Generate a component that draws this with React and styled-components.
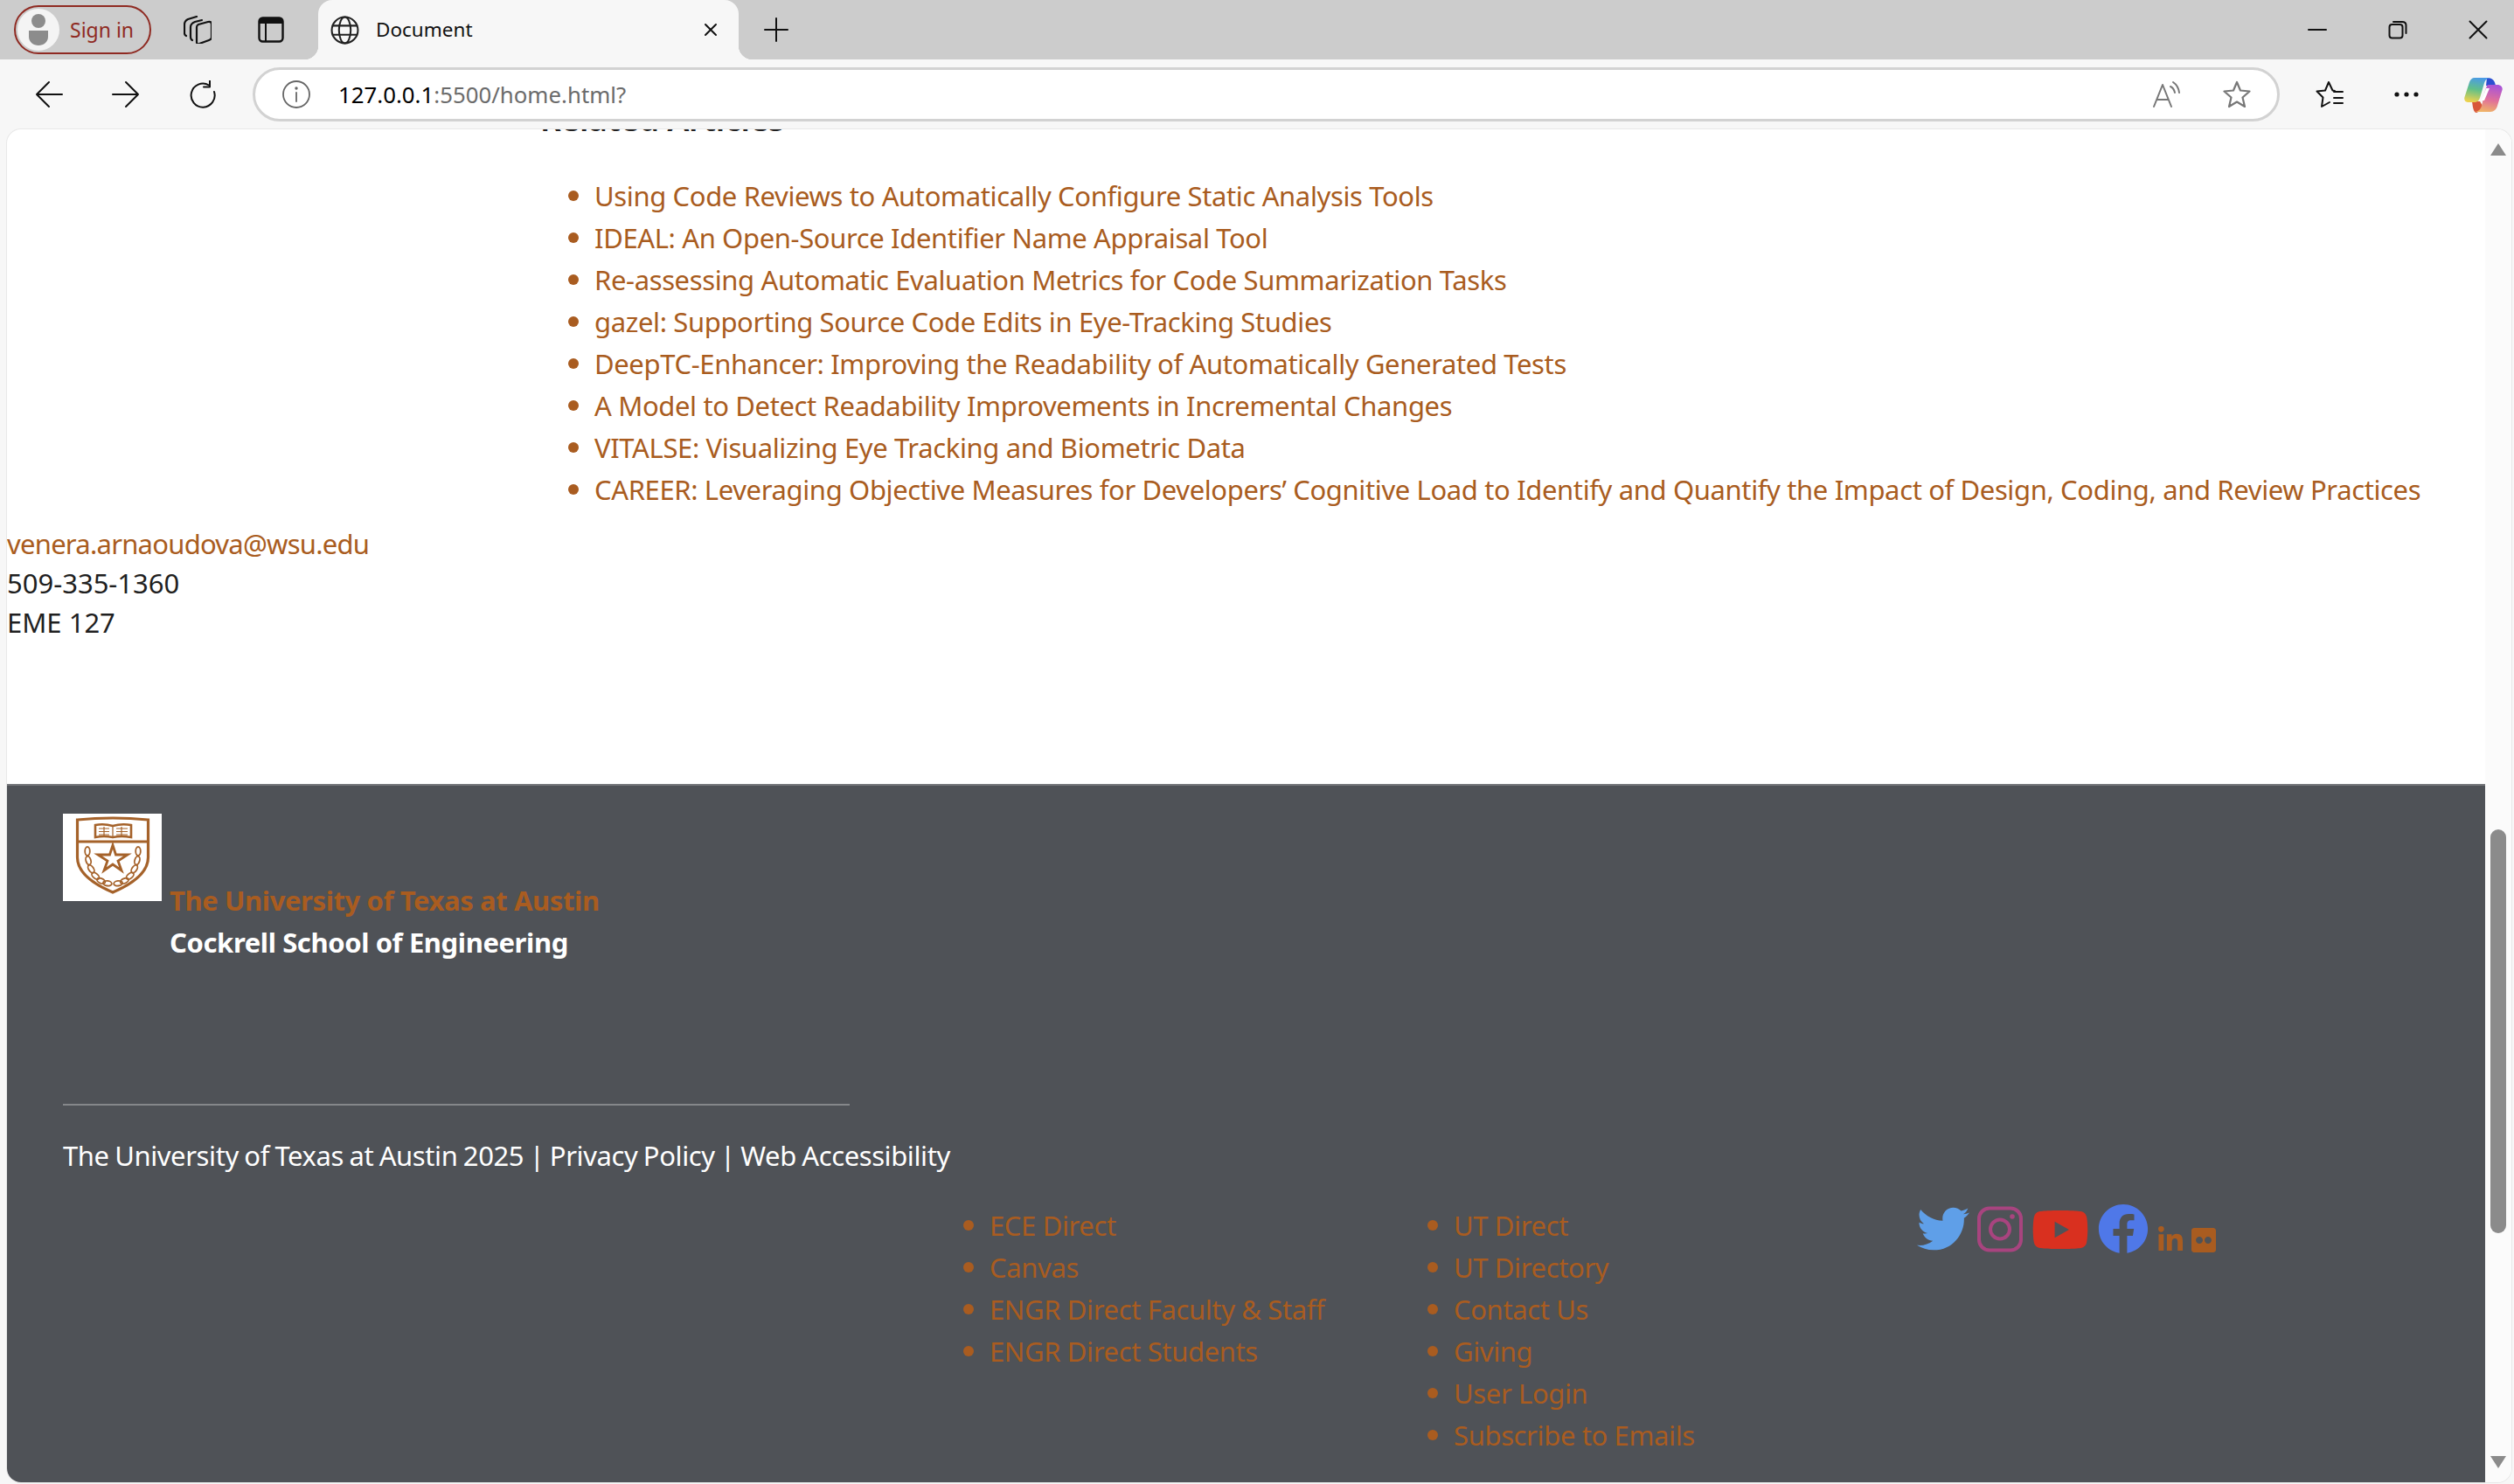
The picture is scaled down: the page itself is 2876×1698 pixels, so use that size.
import React from 'react';
import styled, { createGlobalStyle } from 'styled-components';
import { FaTwitter, FaYoutube, FaFacebook, FaLinkedinIn, FaFlickr } from 'react-icons/fa';

const articles = [
  'Using Code Reviews to Automatically Configure Static Analysis Tools',
  'IDEAL: An Open-Source Identifier Name Appraisal Tool',
  'Re-assessing Automatic Evaluation Metrics for Code Summarization Tasks',
  'gazel: Supporting Source Code Edits in Eye-Tracking Studies',
  'DeepTC-Enhancer: Improving the Readability of Automatically Generated Tests',
  'A Model to Detect Readability Improvements in Incremental Changes',
  'VITALSE: Visualizing Eye Tracking and Biometric Data',
  'CAREER: Leveraging Objective Measures for Developers’ Cognitive Load to Identify and Quantify the Impact of Design, Coding, and Review Practices',
];

const directLinks = ['ECE Direct', 'Canvas', 'ENGR Direct Faculty & Staff', 'ENGR Direct Students'];
const utLinks = ['UT Direct', 'UT Directory', 'Contact Us', 'Giving', 'User Login', 'Subscribe to Emails'];

const orange = '#a95c20';
const fontStack = '"Noto Sans", "Open Sans", sans-serif';

const GlobalStyle = createGlobalStyle`
  html, body {
    margin: 0;
    padding: 0;
    overflow: hidden;
    background: #f7f7f7;
    font-family: ${fontStack};
  }
`;

const Window = styled.div`
  width: 2876px;
  height: 1698px;
  display: flex;
  flex-direction: column;
  background: #f7f7f7;
  overflow: hidden;
`;

const TabStrip = styled.div`
  height: 68px;
  flex: none;
  display: flex;
  align-items: center;
  background: #cccccc;
`;

const SignIn = styled.div`
  width: 157px;
  height: 56px;
  margin-left: 16px;
  box-sizing: border-box;
  border: 2px solid #8f2a22;
  border-radius: 28px;
  display: flex;
  align-items: center;
  gap: 12px;
  padding-left: 2px;
  color: #8f2a22;
  font-size: 23px;
`;

const Avatar = styled.div`
  width: 48px;
  height: 48px;
  border-radius: 50%;
  background: #f4f4f4;
  display: flex;
  align-items: center;
  justify-content: center;
`;

const Slot = styled.div`
  width: 48px;
  height: 48px;
  flex: none;
  display: flex;
  align-items: center;
  justify-content: center;
  margin-left: ${(p) => p.$left || 0}px;
`;

const Tab = styled.div`
  position: relative;
  width: 481px;
  height: 68px;
  margin-left: 30px;
  box-sizing: border-box;
  padding: 0 24px 0 14px;
  display: flex;
  align-items: center;
  background: #f7f7f7;
  border-radius: 16px 16px 0 0;

  &::before,
  &::after {
    content: '';
    position: absolute;
    bottom: 0;
    width: 16px;
    height: 16px;
  }
  &::before {
    left: -16px;
    background: radial-gradient(circle at 0 0, transparent 16px, #f7f7f7 16.5px);
  }
  &::after {
    right: -16px;
    background: radial-gradient(circle at 100% 0, transparent 16px, #f7f7f7 16.5px);
  }
`;

const TabTitle = styled.span`
  flex: 1;
  margin-left: 19px;
  font-size: 22.5px;
  line-height: 30px;
  color: #111;
`;

const WindowControls = styled.div`
  margin-left: auto;
  margin-right: -5px;
  display: flex;
  align-items: center;
`;

const ControlSlot = styled.div`
  width: 92px;
  height: 68px;
  display: flex;
  align-items: center;
  justify-content: center;
`;

const Toolbar = styled.div`
  height: 80px;
  flex: none;
  display: flex;
  align-items: center;
  padding-left: 32px;
  gap: 40px;
  background: #f7f7f7;
`;

const AddressBar = styled.div`
  width: 2319px;
  height: 62px;
  margin-left: -7px;
  box-sizing: border-box;
  border: 3px solid #d2d2d2;
  border-radius: 31px;
  background: #fff;
  display: flex;
  align-items: center;
  padding: 0 30px 0 31px;
  flex: none;
  margin-right: -7px;
`;

const Url = styled.div`
  flex: 1;
  margin-left: 32px;
  font-size: 25.8px;
  color: #6b6b6b;

  b {
    font-weight: 400;
    color: #000;
  }
`;

const AddressIcons = styled.div`
  display: flex;
  align-items: center;
  gap: 48px;
`;

const Panel = styled.div`
  width: 2865px;
  height: 1548px;
  margin-left: 8px;
  flex: none;
  display: flex;
  background: #fff;
  border-radius: 16px;
  overflow: hidden;
  box-shadow: 0 0 0 1px #e8e8e8;
`;

const Page = styled.div`
  flex: 1;
  min-width: 0;
  display: flex;
  flex-direction: column;
`;

const Article = styled.div`
  height: 749px;
  flex: none;
  box-sizing: border-box;
  overflow: hidden;
  color: #1f1f1f;
  font-size: 31px;
`;

const Heading = styled.h3`
  margin: -36px 0 0 610px;
  height: 48px;
  line-height: 48px;
  font-size: 37px;
  font-weight: 600;
  letter-spacing: -0.2px;
  color: #212121;
`;

const ArticleList = styled.ul`
  margin: 40px 0 0 0;
  padding: 0 0 0 672px;
  list-style: none;
`;

const LinkItem = styled.li`
  position: relative;
  height: 48px;
  line-height: 48px;
  white-space: nowrap;
  letter-spacing: -0.37px;
  color: ${orange};

  &::before {
    content: '';
    position: absolute;
    left: -30px;
    top: 18px;
    width: 12px;
    height: 12px;
    border-radius: 50%;
    background: ${orange};
  }
`;

const Contact = styled.div`
  margin-top: 16px;
  line-height: 45px;

  a {
    color: ${orange};
    letter-spacing: -0.75px;
    text-decoration: none;
  }
`;

const Footer = styled.footer`
  flex: 1;
  background: #4f5257;
  border-top: 2px solid #75777b;
  padding: 32px 0 0 64px;
  box-sizing: border-box;
  color: #fff;
  font-size: 31px;
`;

const Brand = styled.div`
  display: flex;
  gap: 9px;
`;

const Logo = styled.div`
  width: 113px;
  height: 100px;
  background: #fff;
  flex: none;
`;

const BrandText = styled.div`
  padding-top: 75px;
  line-height: 48px;
  font-weight: 700;
  font-size: 31px;
  letter-spacing: -0.4px;
`;

const BrandName = styled.div`
  color: ${orange};
`;

const Rule = styled.hr`
  width: 900px;
  margin: 161px 0 0;
  border: 0;
  border-top: 2px solid #85878a;
`;

const Legal = styled.div`
  margin-top: 33px;
  line-height: 48px;
  letter-spacing: -0.4px;
  word-spacing: -1.2px;
`;

const LinkGrid = styled.div`
  display: grid;
  grid-template-columns: 531px 530px auto;
  margin: 32px 0 0 1060px;
`;

const FooterList = styled.ul`
  margin: 0;
  padding: 0;
  list-style: none;
`;

const Socials = styled.div`
  display: flex;
  align-items: flex-end;
  height: 59px;
  margin-top: -3px;
`;

const SocialIcon = styled.div`
  display: flex;
  color: ${(p) => p.$color};
  margin-left: ${(p) => p.$left || 0}px;
  margin-bottom: ${(p) => p.$bottom || 0}px;
`;

const Scrollbar = styled.div`
  width: 30px;
  flex: none;
  box-sizing: border-box;
  padding: 16px 6px 16px;
  display: flex;
  flex-direction: column;
  background: #fbfbfb;
`;

const Thumb = styled.div`
  height: 462px;
  margin-top: 771px;
  border-radius: 9px;
  background: #8b8b8b;
`;

const Arrow = styled.div`
  width: 0;
  height: 0;
  border-left: 9px solid transparent;
  border-right: 9px solid transparent;
  ${(p) => (p.$down
    ? 'border-top: 14px solid #8b8b8b; margin-top: auto;'
    : 'border-bottom: 14px solid #8b8b8b;')}
`;

const Line = ({ size = 32, color = '#111', width = 2, children, box = 32 }) => (
  <svg width={size} height={size} viewBox={`0 0 ${box} ${box}`} fill="none" stroke={color} strokeWidth={width} strokeLinecap="round" strokeLinejoin="round">
    {children}
  </svg>
);

const Crest = () => {
  const c = '#a5622a';
  const leaves = [0, 1, 2, 3, 4, 5];
  return (
    <svg width="113" height="100" viewBox="0 0 113 100" fill="none" stroke={c}>
      <path d="M16.5 7 Q57 3 97.5 7 V50 C97.5 68 78 81 57 90 C36 81 16.5 68 16.5 50 Z" strokeWidth="3.2" />
      <path d="M16.5 32 H97.5" strokeWidth="3.2" />
      <path d="M37 13 Q47 11 57 14 Q67 11 78 13 V27 Q67 25 57 27 Q47 25 37 27 Z" strokeWidth="2.6" />
      <path d="M57 14 V27 M41 17 H53 M41 20.5 H53 M41 24 H53 M61 17 H74 M61 20.5 H74 M61 24 H74 M47 15 V25 M67 15 V25" strokeWidth="1.2" />
      <path d="M57 36 L60.5 47 L74 47 L63 54 L67 65 L57 58 L47 65 L51 54 L40 47 L53.5 47 Z" strokeWidth="2.8" />
      {leaves.map((i) => {
        const t = (i / 5) * 1.45;
        const x = 28 + 26 * (1 - Math.cos(t));
        const y = 43 + 37 * Math.sin(t);
        const a = (t * 180) / Math.PI;
        return (
          <g key={i} strokeWidth="1.8">
            <ellipse cx={x} cy={y} rx="2.8" ry="5" transform={`rotate(${-a} ${x} ${y})`} />
            <ellipse cx={114 - x} cy={y} rx="2.8" ry="5" transform={`rotate(${a} ${114 - x} ${y})`} />
          </g>
        );
      })}
    </svg>
  );
};

const Copilot = () => (
  <svg width="44" height="41" viewBox="0 0 44 41">
    <defs>
      <linearGradient id="copA" x1="0.6" y1="0" x2="0.4" y2="1">
        <stop offset="0" stopColor="#4a9ae8" />
        <stop offset="0.5" stopColor="#62c088" />
        <stop offset="1" stopColor="#ecd24e" />
      </linearGradient>
      <linearGradient id="copB" x1="0.6" y1="0" x2="0.4" y2="1">
        <stop offset="0" stopColor="#a854d8" />
        <stop offset="0.55" stopColor="#e0709a" />
        <stop offset="1" stopColor="#f0b468" />
      </linearGradient>
    </defs>
    <path d="M26 1 C32 1 35 4 36 10 H25 Z" fill="#2c4fd0" />
    <path d="M9 28 H18 L21 33 C20 37 17 40 14 41 C11 41 10 36 9 28 Z" fill="#d8583a" />
    <path d="M12 1 H30 C26 1 24 4 23 7 L18 24 C17 27 15 29 11 29 H4 C1 29 -0.5 26 0.5 23 L6 6 C7 3 9 1 12 1 Z" fill="url(#copA)" />
    <path d="M27 9 H38 C42 9 44.5 12 43.5 15 L38 33 C37 37 34 40 30 40 H12 C16 40 19 37 20 33 L24 16 C25 12 26 10 27 9 Z" fill="url(#copB)" />
    <path d="M25 13 H29 L23 27 H18 Q21 25 22 22 Z" fill="#fff" />
  </svg>
);

const InstagramMark = () => (
  <svg width="52" height="53" viewBox="0 0 52 53" fill="none" stroke="#a8447f" strokeWidth="4">
    <rect x="2" y="2.5" width="48" height="48" rx="12" />
    <circle cx="26" cy="26.5" r="11" />
    <circle cx="40" cy="12" r="2.8" fill="#a8447f" stroke="none" />
  </svg>
);

const BrowserChrome = () => (
  <>
    <TabStrip>
      <SignIn>
        <Avatar>
          <svg width="24" height="38" viewBox="0 0 24 38" fill="#8c8c8c">
            <circle cx="12" cy="9" r="8" />
            <path d="M1 20 H23 V27 C23 33 18 37 12 37 C6 37 1 33 1 27 Z" />
          </svg>
        </Avatar>
        Sign in
      </SignIn>
      <Slot $left={29}>
        <Line width={2.2}>
          <path d="M17 10 L28 7 Q32 6 32 10 V25 Q32 27 29 28 L18 32 Q15 33 15 30 V13 Q15 11 17 10 Z" />
          <path d="M21 5 L13 7 Q8 9 8 13 V24 Q8 27 10 28" />
          <path d="M15 1 L5 4 Q1 6 1 10 V20 Q1 22 3 23" />
        </Line>
      </Slot>
      <Slot $left={36}>
        <svg width="30" height="30" viewBox="0 0 30 30">
          <rect x="1.5" y="1.5" width="27" height="27" rx="4" fill="none" stroke="#111" strokeWidth="2.4" />
          <path d="M1.5 5.5 Q1.5 1.5 5.5 1.5 H24.5 Q28.5 1.5 28.5 5.5 V8 H1.5 Z" fill="#111" />
          <path d="M9 8 V28" stroke="#111" strokeWidth="2" />
        </svg>
      </Slot>
      <Tab>
        <Line size={33} color="#222" width={2}>
          <circle cx="16" cy="16" r="14.5" />
          <ellipse cx="16" cy="16" rx="6.5" ry="14.5" />
          <path d="M2.5 11 H29.5 M2.5 21 H29.5" />
        </Line>
        <TabTitle>Document</TabTitle>
        <Line size={16} box={16} width={2}>
          <path d="M2 2 L14 14 M14 2 L2 14" />
        </Line>
      </Tab>
      <Slot $left={19}>
        <Line size={28} box={28} width={2}>
          <path d="M14 1 V27 M1 14 H27" />
        </Line>
      </Slot>
      <WindowControls>
        <ControlSlot>
          <Line size={22} box={22} width={2}><path d="M1 11 H21" /></Line>
        </ControlSlot>
        <ControlSlot>
          <Line size={22} box={22} width={2}>
            <rect x="1.5" y="5" width="15" height="15.5" rx="3" />
            <path d="M6 2 H16 Q20.5 2 20.5 6 V15" />
          </Line>
        </ControlSlot>
        <ControlSlot>
          <Line size={22} box={22} width={2}><path d="M1.5 1.5 L20.5 20.5 M20.5 1.5 L1.5 20.5" /></Line>
        </ControlSlot>
      </WindowControls>
    </TabStrip>
    <Toolbar>
      <Slot>
        <Line>
          <path d="M2 16 H31 M16 2 L2 16 L16 30" />
        </Line>
      </Slot>
      <Slot>
        <Line>
          <path d="M1 16 H30 M16 2 L30 16 L16 30" />
        </Line>
      </Slot>
      <Slot>
        <Line>
          <path d="M23 5.5 A13.5 13.5 0 1 0 29 13" />
          <path d="M24 0.5 V7.5 H17" />
        </Line>
      </Slot>
      <AddressBar>
        <Line color="#666" width={1.8}>
          <circle cx="16" cy="16" r="15" />
          <path d="M16 14 V24" />
          <circle cx="16" cy="9" r="0.8" />
        </Line>
        <Url><b>127.0.0.1</b>:5500/home.html?</Url>
        <AddressIcons>
          <Line color="#777" width={2}>
            <path d="M1 30 L11 5 L21 30 M4.5 22 H17.5" />
            <path d="M20 7 Q24 9 25 14 M23 2 Q29 6 30 14" />
          </Line>
          <Line color="#777" width={2.2}>
            <path d="M16 2 L20 11.5 L30.5 12.5 L22.5 19.5 L25 30 L16 24.5 L7 30 L9.5 19.5 L1.5 12.5 L12 11.5 Z" />
          </Line>
        </AddressIcons>
      </AddressBar>
      <Slot>
        <Line>
          <path d="M22 12 L19.5 11.5 L15 2 L11 11.5 L1.5 12.5 L8.5 19.5 L7 30 L16 25" />
          <path d="M21 13 H31 M21 20 H31 M21 26 H31" />
        </Line>
      </Slot>
      <Slot>
        <svg width="28" height="6" viewBox="0 0 28 6" fill="#111">
          <circle cx="3" cy="3" r="2.6" />
          <circle cx="14" cy="3" r="2.6" />
          <circle cx="25" cy="3" r="2.6" />
        </svg>
      </Slot>
      <Slot>
        <Copilot />
      </Slot>
    </Toolbar>
  </>
);

const App = () => (
  <Window>
    <GlobalStyle />
    <BrowserChrome />
    <Panel>
      <Page>
        <Article>
          <Heading>Related Articles</Heading>
          <ArticleList>
            {articles.map((title) => <LinkItem key={title}>{title}</LinkItem>)}
          </ArticleList>
          <Contact>
            <a href="#mail">venera.arnaoudova@wsu.edu</a>
            <div>509-335-1360</div>
            <div>EME 127</div>
          </Contact>
        </Article>
        <Footer>
          <Brand>
            <Logo><Crest /></Logo>
            <BrandText>
              <BrandName>The University of Texas at Austin</BrandName>
              <div>Cockrell School of Engineering</div>
            </BrandText>
          </Brand>
          <Rule />
          <Legal>The University of Texas at Austin 2025 | Privacy Policy | Web Accessibility</Legal>
          <LinkGrid>
            <FooterList>
              {directLinks.map((name) => <LinkItem key={name}>{name}</LinkItem>)}
            </FooterList>
            <FooterList>
              {utLinks.map((name) => <LinkItem key={name}>{name}</LinkItem>)}
            </FooterList>
            <Socials>
              <SocialIcon $color="#5f9fe8" $bottom={-2}><FaTwitter size={60} /></SocialIcon>
              <SocialIcon $left={9} $bottom={1}><InstagramMark /></SocialIcon>
              <SocialIcon $color="#d9301f" $left={10} $bottom={-6}><FaYoutube size={66} /></SocialIcon>
              <SocialIcon $color="#4f78e8" $left={10} $bottom={-1}><FaFacebook size={58} /></SocialIcon>
              <SocialIcon $color={orange} $left={9} $bottom={-1}><FaLinkedinIn size={32} /></SocialIcon>
              <SocialIcon $color={orange} $left={6} $bottom={-1}><FaFlickr size={32} /></SocialIcon>
            </Socials>
          </LinkGrid>
        </Footer>
      </Page>
      <Scrollbar>
        <Arrow />
        <Thumb />
        <Arrow $down />
      </Scrollbar>
    </Panel>
  </Window>
);

export default App;
